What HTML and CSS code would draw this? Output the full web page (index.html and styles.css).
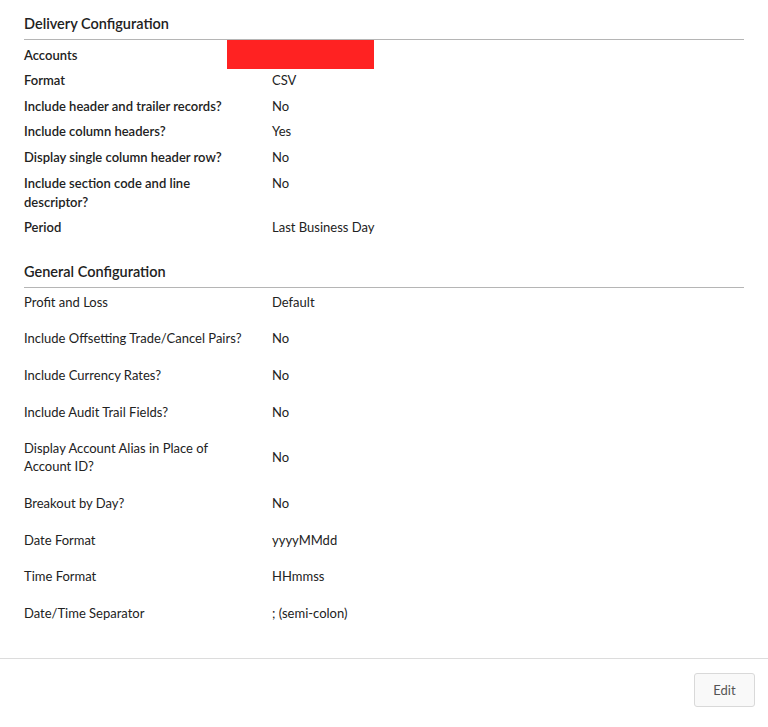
FILE: index.html
```html
<!DOCTYPE html>
<html>
<head>
<meta charset="utf-8">
<link rel="stylesheet" href="styles.css">
</head>
<body>
<div class="content">
  <section class="section">
    <h2 class="section-title">Delivery Configuration</h2>
    <div class="rows rows-delivery">
      <div class="row row-redacted">
        <div class="label">Accounts</div>
        <div class="value"></div>
        <div class="redaction"></div>
      </div>
      <div class="row"><div class="label">Format</div><div class="value">CSV</div></div>
      <div class="row"><div class="label">Include header and trailer records?</div><div class="value">No</div></div>
      <div class="row"><div class="label">Include column headers?</div><div class="value">Yes</div></div>
      <div class="row"><div class="label">Display single column header row?</div><div class="value">No</div></div>
      <div class="row"><div class="label">Include section code and line descriptor?</div><div class="value value-top">No</div></div>
      <div class="row"><div class="label">Period</div><div class="value">Last Business Day</div></div>
    </div>
  </section>
  <section class="section section-general">
    <h2 class="section-title">General Configuration</h2>
    <div class="rows rows-general">
      <div class="row"><div class="label">Profit and Loss</div><div class="value">Default</div></div>
      <div class="row"><div class="label">Include Offsetting Trade/Cancel Pairs?</div><div class="value">No</div></div>
      <div class="row"><div class="label">Include Currency Rates?</div><div class="value">No</div></div>
      <div class="row"><div class="label">Include Audit Trail Fields?</div><div class="value">No</div></div>
      <div class="row"><div class="label">Display Account Alias in Place of Account ID?</div><div class="value">No</div></div>
      <div class="row"><div class="label">Breakout by Day?</div><div class="value">No</div></div>
      <div class="row"><div class="label">Date Format</div><div class="value">yyyyMMdd</div></div>
      <div class="row"><div class="label">Time Format</div><div class="value">HHmmss</div></div>
      <div class="row"><div class="label">Date/Time Separator</div><div class="value">; (semi-colon)</div></div>
    </div>
  </section>
</div>
<footer class="footer">
  <button class="btn">Edit</button>
</footer>
</body>
</html>
```
FILE: styles.css
```css
* { box-sizing: border-box; }
html, body {
  margin: 0;
  padding: 0;
  background: #fff;
}
body {
  font-family: Lato, "Open Sans", sans-serif;
  color: #222;
  font-size: 13px;
  width: 768px;
  height: 727px;
  display: flex;
  flex-direction: column;
}
.content {
  padding: 0 24px;
}
.section-title {
  margin: 0;
  font-size: 14.5px;
  font-weight: 600;
  line-height: 20px;
  padding: 14px 0 5px;
  border-bottom: 1px solid #b5b5b5;
  color: #222;
}
.section-general .section-title {
  margin-top: 9px;
}
.rows-delivery .row {
  padding: 5.5px 0 1.17px;
  line-height: 19px;
}
.rows-delivery .label {
  font-weight: 600;
}
.rows-delivery .value-top {
  align-self: start;
}
.rows-general .row {
  padding: 5px 0 13.7px;
  line-height: 18px;
}
.row {
  display: grid;
  grid-template-columns: 224px 1fr;
  column-gap: 24px;
  align-items: center;
  position: relative;
}
.row-redacted {
  min-height: 25.67px;
}
.redaction {
  position: absolute;
  left: 203px;
  top: 0;
  width: 147px;
  height: 29px;
  background: #ff2222;
}
.footer {
  margin-top: 22px;
  border-top: 1px solid #dcdcdc;
  display: flex;
  justify-content: flex-end;
  padding: 14px 13px 0 0;
}
.btn {
  width: 61px;
  height: 34px;
  background: #f9f9f9;
  border: 1px solid #d9d9d9;
  border-radius: 3px;
  font-family: Lato, "Open Sans", sans-serif;
  font-size: 13px;
  color: #555;
  padding: 0;
}
```
